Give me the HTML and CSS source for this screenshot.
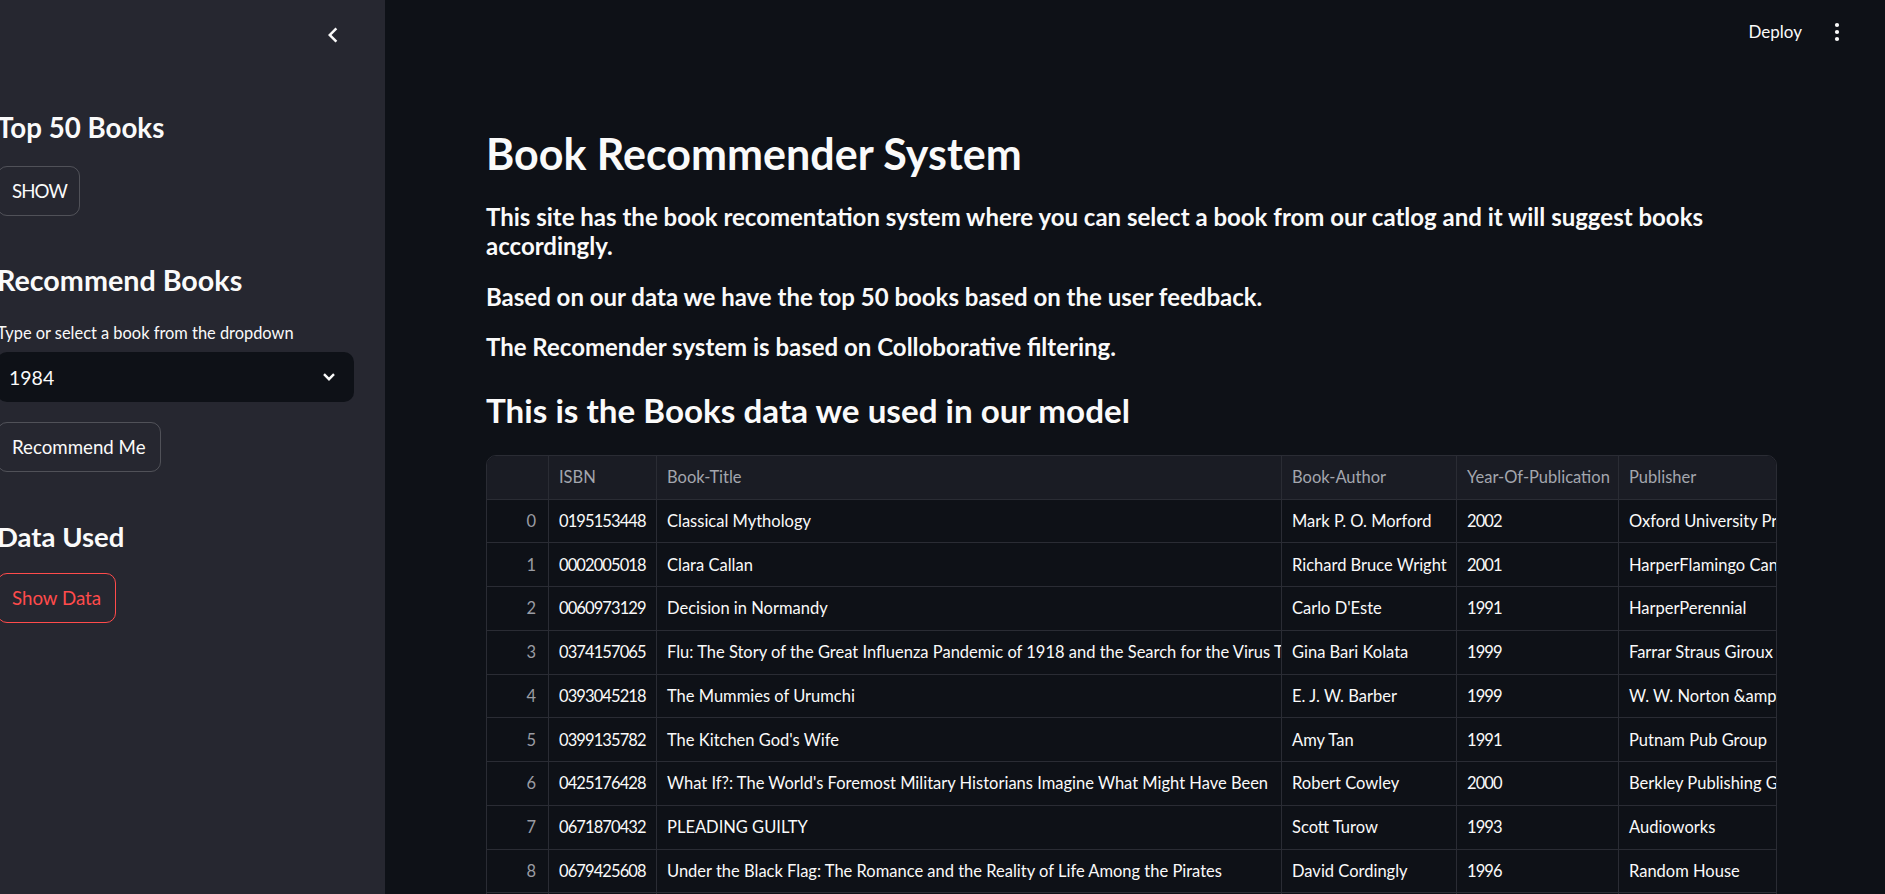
FILE: index.html
```html
<!DOCTYPE html>
<html lang="en">
<head>
<meta charset="utf-8">
<title>Book Recommender System</title>
<link rel="stylesheet" href="styles.css">
</head>
<body>
<div class="app">
  <aside class="sidebar">
    <div class="sb-top">
      <span class="collapse">
        <svg viewBox="0 0 24 24" width="30" height="30"><path d="M15.41 7.41 14 6l-6 6 6 6 1.41-1.41L10.83 12z" fill="#fafafa"/></svg>
      </span>
    </div>
    <div class="sb-content">
      <h2 class="sb-h h-top">Top 50 Books</h2>
      <button class="btn btn-show">SHOW</button>
      <h2 class="sb-h h-rec">Recommend Books</h2>
      <div class="sb-label">Type or select a book from the dropdown</div>
      <div class="select">
        <span>1984</span>
        <svg viewBox="0 0 12 8" width="12" height="8"><path d="M1 1.2 6 6.2 11 1.2" fill="none" stroke="#fafafa" stroke-width="2.4"/></svg>
      </div>
      <button class="btn btn-rec">Recommend Me</button>
      <h2 class="sb-h h-data">Data Used</h2>
      <button class="btn btn-red">Show Data</button>
    </div>
  </aside>
  <main class="main">
    <header class="topbar">
      <span class="deploy">Deploy</span>
      <span class="kebab">
        <svg viewBox="0 0 6 20" width="6" height="20"><circle cx="3" cy="3" r="2.1" fill="#fafafa"/><circle cx="3" cy="10" r="2.1" fill="#fafafa"/><circle cx="3" cy="17" r="2.1" fill="#fafafa"/></svg>
      </span>
    </header>
    <div class="content">
      <h1 class="title">Book Recommender System</h1>
      <p class="lead lead-1">This site has the book recomentation system where you can select a book from our catlog and it will suggest books accordingly.</p>
      <p class="lead lead-2">Based on our data we have the top 50 books based on the user feedback.</p>
      <p class="lead lead-3">The Recomender system is based on Colloborative filtering.</p>
      <h3 class="sub">This is the Books data we used in our model</h3>
      <div class="df">
        <div class="df-row df-head">
          <div class="c idx"></div><div class="c">ISBN</div><div class="c">Book-Title</div><div class="c">Book-Author</div><div class="c">Year-Of-Publication</div><div class="c">Publisher</div>
        </div>
        <div class="df-row">
          <div class="c idx">0</div><div class="c num">0195153448</div><div class="c">Classical Mythology</div><div class="c">Mark P. O. Morford</div><div class="c num">2002</div><div class="c">Oxford University Press</div>
        </div>
        <div class="df-row">
          <div class="c idx">1</div><div class="c num">0002005018</div><div class="c">Clara Callan</div><div class="c">Richard Bruce Wright</div><div class="c num">2001</div><div class="c">HarperFlamingo Canada</div>
        </div>
        <div class="df-row">
          <div class="c idx">2</div><div class="c num">0060973129</div><div class="c">Decision in Normandy</div><div class="c">Carlo D'Este</div><div class="c num">1991</div><div class="c">HarperPerennial</div>
        </div>
        <div class="df-row">
          <div class="c idx">3</div><div class="c num">0374157065</div><div class="c">Flu: The Story of the Great Influenza Pandemic of 1918 and the Search for the Virus That Caused It</div><div class="c">Gina Bari Kolata</div><div class="c num">1999</div><div class="c">Farrar Straus Giroux</div>
        </div>
        <div class="df-row">
          <div class="c idx">4</div><div class="c num">0393045218</div><div class="c">The Mummies of Urumchi</div><div class="c">E. J. W. Barber</div><div class="c num">1999</div><div class="c">W. W. Norton &amp;amp; Company</div>
        </div>
        <div class="df-row">
          <div class="c idx">5</div><div class="c num">0399135782</div><div class="c">The Kitchen God's Wife</div><div class="c">Amy Tan</div><div class="c num">1991</div><div class="c">Putnam Pub Group</div>
        </div>
        <div class="df-row">
          <div class="c idx">6</div><div class="c num">0425176428</div><div class="c">What If?: The World's Foremost Military Historians Imagine What Might Have Been</div><div class="c">Robert Cowley</div><div class="c num">2000</div><div class="c">Berkley Publishing Group</div>
        </div>
        <div class="df-row">
          <div class="c idx">7</div><div class="c num">0671870432</div><div class="c">PLEADING GUILTY</div><div class="c">Scott Turow</div><div class="c num">1993</div><div class="c">Audioworks</div>
        </div>
        <div class="df-row">
          <div class="c idx">8</div><div class="c num">0679425608</div><div class="c">Under the Black Flag: The Romance and the Reality of Life Among the Pirates</div><div class="c">David Cordingly</div><div class="c num">1996</div><div class="c">Random House</div>
        </div>
        <div class="df-row">
          <div class="c idx">9</div><div class="c num">074322678X</div><div class="c">Where You'll Find Me: And Other Stories</div><div class="c">Ann Beattie</div><div class="c num">2002</div><div class="c">Scribner</div>
        </div>
      </div>
    </div>
  </main>
</div>
</body>
</html>
```
FILE: styles.css
```css
* { box-sizing: border-box; }
html, body {
  margin: 0;
  padding: 0;
  height: 100%;
  overflow: hidden;
  background: #0e1117;
  color: #fafafa;
  font-family: Lato, "Open Sans", sans-serif;
}
.app {
  display: flex;
  height: 100vh;
  overflow: hidden;
}

/* Sidebar */
.sidebar {
  width: 385px;
  flex: 0 0 385px;
  background: #262730;
  overflow: hidden;
}
.sb-top {
  height: 70px;
  display: flex;
  justify-content: flex-end;
  align-items: center;
  padding-right: 37px;
}
.collapse { display: flex; width: 30px; height: 30px; }
.sb-content {
  margin-left: -3px;
  width: 357px;
  padding-top: 41.5px;
  display: flex;
  flex-direction: column;
  align-items: flex-start;
}
.sb-h {
  margin: 0;
  font-size: 28px;
  line-height: 32px;
  font-weight: 700;
  color: #fafafa;
}
.h-top { font-size: 27.7px; }
.h-rec { margin-top: 47.5px; font-size: 28.7px; }
.h-data { margin-top: 48.5px; font-size: 27.5px; }
.btn {
  height: 50px;
  padding: 0 14px;
  border: 1px solid rgba(250, 250, 250, 0.2);
  border-radius: 10px;
  background: transparent;
  color: #fafafa;
  font-family: Lato, "Open Sans", sans-serif;
  font-size: 18.7px;
  line-height: 48px;
  font-weight: 400;
}
.btn-show { margin-top: 22.5px; padding: 0 12px 0 14px; letter-spacing: -0.9px; }
.btn-rec { margin-top: 20px; }
.btn-red {
  margin-top: 20.5px;
  border-color: #ff4b4b;
  color: #ff4b4b;
}
.sb-label {
  margin-top: 26px;
  font-size: 16.4px;
  line-height: 22px;
  color: #fafafa;
}
.select {
  margin-top: 8.5px;
  width: 357px;
  height: 50px;
  background: #0e1117;
  border-radius: 10px;
  display: flex;
  align-items: center;
  justify-content: space-between;
  padding: 0 19px 0 12px;
  font-size: 19.5px;
}

/* Main */
.main {
  flex: 1;
  min-width: 0;
  overflow: hidden;
}
.topbar {
  height: 64px;
  display: flex;
  justify-content: flex-end;
  align-items: center;
  padding-right: 45px;
  gap: 32px;
}
.deploy {
  font-size: 17px;
  line-height: 22px;
  color: #fafafa;
}
.kebab { display: flex; }
.content {
  padding: 0 100px 0 101px;
}
.title {
  margin: 64px 0 0;
  font-size: 43px;
  line-height: 52px;
  font-weight: 700;
}
.lead {
  margin: 0;
  font-size: 24px;
  line-height: 29px;
  font-weight: 700;
}
.lead-1 { margin-top: 22px; }
.lead-2 { margin-top: 22px; }
.lead-3 { margin-top: 21px; }
.sub {
  margin: 29px 0 0;
  font-size: 33.2px;
  line-height: 40px;
  font-weight: 700;
}

/* Dataframe */
.df {
  margin-top: 24.5px;
  width: 1291px;
  border: 1px solid #2a2c34;
  border-radius: 10px;
  overflow: hidden;
}
.df-row {
  display: grid;
  grid-template-columns: 62px 108px 625px 175px 162px 320px;
  height: 43.75px;
  border-bottom: 1px solid #2a2c34;
  font-size: 16.5px;
}
.df-head {
  height: 44px;
  background: #1a1c24;
  color: #a3a6ae;
}
.c {
  display: flex;
  align-items: center;
  padding: 0 10px;
  border-right: 1px solid #2a2c34;
  white-space: nowrap;
  overflow: hidden;
}
.c.num {
  letter-spacing: -0.9px;
}
.c.idx {
  justify-content: flex-end;
  padding-right: 12px;
  color: #9a9ca3;
}
.df-head .c.idx { color: transparent; }
```
